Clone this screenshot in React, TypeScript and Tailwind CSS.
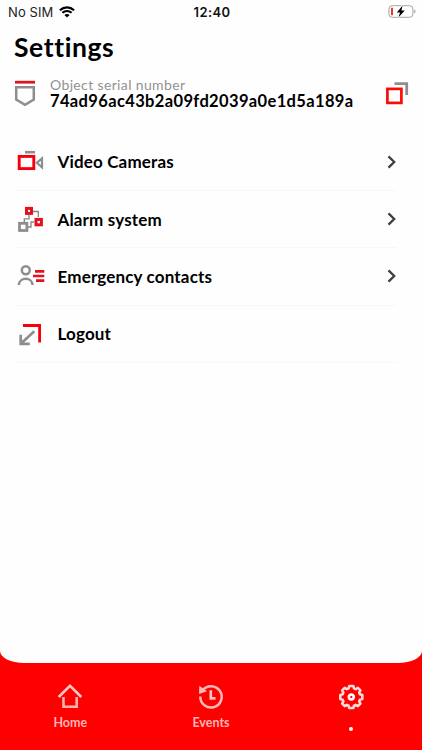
import React from 'react';

const RED = '#f5000b';
const GREY = '#8e8e8e';

function Shield() {
  return (
    <svg width="22" height="27" viewBox="0 0 22 27" fill="none">
      <path d="M1 2.2H21" stroke="#e0141c" strokeWidth="2.8" />
      <path d="M2.2 7.2H19.8V19.5L11 24.8L2.2 19.5Z" stroke={GREY} strokeWidth="2.5" />
    </svg>
  );
}

function Copy() {
  return (
    <svg width="24" height="24" viewBox="386 81 24 24" fill="none">
      <path d="M394.5 83.7H406.7V95" stroke={GREY} strokeWidth="2.8" />
      <rect x="387.4" y="88.9" width="14" height="14" stroke="#ff0808" strokeWidth="2.7" />
    </svg>
  );
}

function Camera() {
  return (
    <svg width="28" height="28" viewBox="17 148 28 28" fill="none">
      <path d="M25 152.2H35" stroke={GREY} strokeWidth="2.6" />
      <rect x="19.2" y="156.4" width="14.6" height="12.2" stroke={RED} strokeWidth="2.9" />
      <path d="M36.8 162.8L42 158.3V167.3Z" stroke={GREY} strokeWidth="2.2" />
    </svg>
  );
}

function Alarm() {
  return (
    <svg width="28" height="28" viewBox="17 206 28 28" fill="none">
      <path d="M33 212.5H38.3V218M29 216V219.8H24.3V223M28 228H31V223H34" stroke="#858585" strokeWidth="1.3" />
      <rect x="26.5" y="209.4" width="5" height="5" stroke="#e5101d" strokeWidth="3" />
      <rect x="36" y="220.4" width="5.4" height="5.4" stroke="#e5101d" strokeWidth="3" />
      <rect x="19.5" y="224.3" width="7.4" height="7.2" stroke={GREY} strokeWidth="2.8" />
    </svg>
  );
}

function Contacts() {
  return (
    <svg width="28" height="28" viewBox="17 263 28 28" fill="none">
      <circle cx="25.8" cy="271.3" r="4" stroke={GREY} strokeWidth="2.5" />
      <path d="M18.8 286C19.2 277.8 32.2 277.8 32.6 286" stroke={GREY} strokeWidth="2.5" />
      <path d="M35 272.4H44.3M33 277H44.3M36 281.6H44.3" stroke="#e5101d" strokeWidth="2.6" />
    </svg>
  );
}

function Logout() {
  return (
    <svg width="28" height="28" viewBox="17 320 28 28" fill="none">
      <path d="M23 325.5H39.6V342.5" stroke={RED} strokeWidth="2.8" />
      <path d="M34.3 331.2L21 343.5M20.7 334.8V343.8H29.8" stroke={GREY} strokeWidth="2.7" />
    </svg>
  );
}

function Chevron() {
  return (
    <svg width="10" height="14" viewBox="0 0 10 14" fill="none">
      <path d="M1.5 1.4L7.2 7L1.5 12.6" stroke="#3f3f3f" strokeWidth="2.3" />
    </svg>
  );
}

function Wifi() {
  return (
    <svg width="16" height="12" viewBox="0 0 16 12" fill="none">
      <path d="M.9 4.2C5 .4 11 .4 15.1 4.2M3.4 6.8C6 4.4 10 4.4 12.6 6.8" stroke="#000" strokeWidth="2.2" />
      <path d="M8 11.6L5.4 9C6.9 7.7 9.1 7.7 10.6 9Z" fill="#000" />
    </svg>
  );
}

function Battery() {
  return (
    <svg width="28" height="14" viewBox="388 5 28 14" fill="none">
      <rect x="388.9" y="5.7" width="24" height="11.6" rx="3.2" stroke="#a4a4a4" />
      <path d="M414.1 9.6C416 10.2 416 12.8 414.1 13.4Z" fill="#a4a4a4" />
      <path d="M391 7.8H393V15.2H391Z" fill="#e63b35" />
      <path d="M402.6 5.5L396.8 12.4H400L398.6 17.3L404.8 10.5H401.4Z" fill="#000" stroke="#fff" strokeWidth="1.6" paintOrder="stroke" />
    </svg>
  );
}

function Home() {
  return (
    <svg width="28" height="28" viewBox="56.5 683 28 28" fill="none">
      <path d="M59.2 697L70.5 685.8L81.8 697" stroke="#ffc4c4" strokeWidth="2.6" />
      <path d="M64 697V706.7H77.2V697" stroke="#ffb3b3" strokeWidth="2.6" />
    </svg>
  );
}

function History() {
  return (
    <svg width="28" height="28" viewBox="197 683 28 28" fill="none">
      <path d="M202.6 690.2A10.7 10.7 0 1 1 200.3 696.5" stroke="#ffb9b9" strokeWidth="2.5" />
      <path d="M199.3 685.8L207 691.2L199 694Z" fill="#ffb9b9" />
      <path d="M210.8 690.3V698.4H215.5" stroke="#ffc4c4" strokeWidth="2.6" />
    </svg>
  );
}

function Gear() {
  return (
    <svg width="28" height="28" viewBox="-13.3 -14 28 28" fill="none">
      <path
        d="M-2.1-11H2.1L2.7-8.6L4.4-7.9L6.6-9.1L9.1-6.6L7.9-4.4L8.6-2.7L11-2.1V2.1L8.6 2.7L7.9 4.4L9.1 6.6L6.6 9.1L4.4 7.9L2.7 8.6L2.1 11H-2.1L-2.7 8.6L-4.4 7.9L-6.6 9.1L-9.1 6.6L-7.9 4.4L-8.6 2.7L-11 2.1V-2.1L-8.6-2.7L-7.9-4.4L-9.1-6.6L-6.6-9.1L-4.4-7.9L-2.7-8.6Z"
        stroke="#ffdada" strokeWidth="2.6" strokeLinejoin="round"
      />
      <circle r="2.5" stroke="#fff" strokeWidth="2.6" />
    </svg>
  );
}

const rows = [
  { label: 'Video Cameras', icon: <Camera />, arrow: true },
  { label: 'Alarm system', icon: <Alarm />, arrow: true },
  { label: 'Emergency contacts', icon: <Contacts />, arrow: true },
  { label: 'Logout', icon: <Logout />, arrow: false },
];

export default function App() {
  return (
    <div className="flex h-[750px] w-[422px] flex-col overflow-hidden bg-[#ff0000] font-['Lato',sans-serif] text-black">
      <main className="flex h-[663px] flex-col rounded-b-[24px_12px] bg-[#fefefe]">
        <div className="grid h-6 grid-cols-3 items-center pl-2 pr-1.5 font-['Inter',sans-serif] text-[13px]">
          <div className="flex items-center gap-1.5">
            <span className="pt-px tracking-[0.1px] text-[#222]">No SIM</span>
            <Wifi />
          </div>
          <span className="pt-px text-center font-semibold tracking-[0.4px] text-[#111]">12:40</span>
          <div className="flex justify-end"><Battery /></div>
        </div>

        <h1 className="h-[46px] pl-[14px] text-[26.5px] font-bold leading-[46px] tracking-[0.6px]">Settings</h1>

        <section className="flex h-16 pl-[14px] pt-[8px]">
          <div className="pt-[2px]"><Shield /></div>
          <div className="ml-[14px] flex w-[336px] flex-col whitespace-nowrap">
            <span className="h-[15px] text-[14px] leading-[14px] tracking-[0.36px] text-[#929292]">Object serial number</span>
            <span className="h-[16px] text-[16.5px] font-bold leading-[16px] tracking-[0.36px]">74ad96ac43b2a09fd2039a0e1d5a189a</span>
          </div>
          <div className="pt-[3px]"><Copy /></div>
        </section>

        <ul className="flex flex-col pl-[17px] pr-[25px]">
          {rows.map((row) => (
            <li key={row.label} className="flex h-[57.2px] items-center border-b border-[#f7f7f7]">
              {row.icon}
              <span className="ml-[12.5px] flex-1 text-[17px] font-bold tracking-[0.16px]">{row.label}</span>
              {row.arrow && <Chevron />}
            </li>
          ))}
        </ul>
      </main>

      <nav className="grid h-[87px] grid-cols-3 text-[12.5px] font-bold text-[#ffb5b5]">
        <div className="flex flex-col items-center pt-5">
          <Home />
          <span className="mt-[3px] leading-[18px]">Home</span>
        </div>
        <div className="flex flex-col items-center pt-5">
          <History />
          <span className="mt-[3px] leading-[18px]">Events</span>
        </div>
        <div className="flex flex-col items-center pt-5">
          <Gear />
          <span className="mr-[1px] mt-4 h-1 w-1 rounded-full bg-white" />
        </div>
      </nav>
    </div>
  );
}
